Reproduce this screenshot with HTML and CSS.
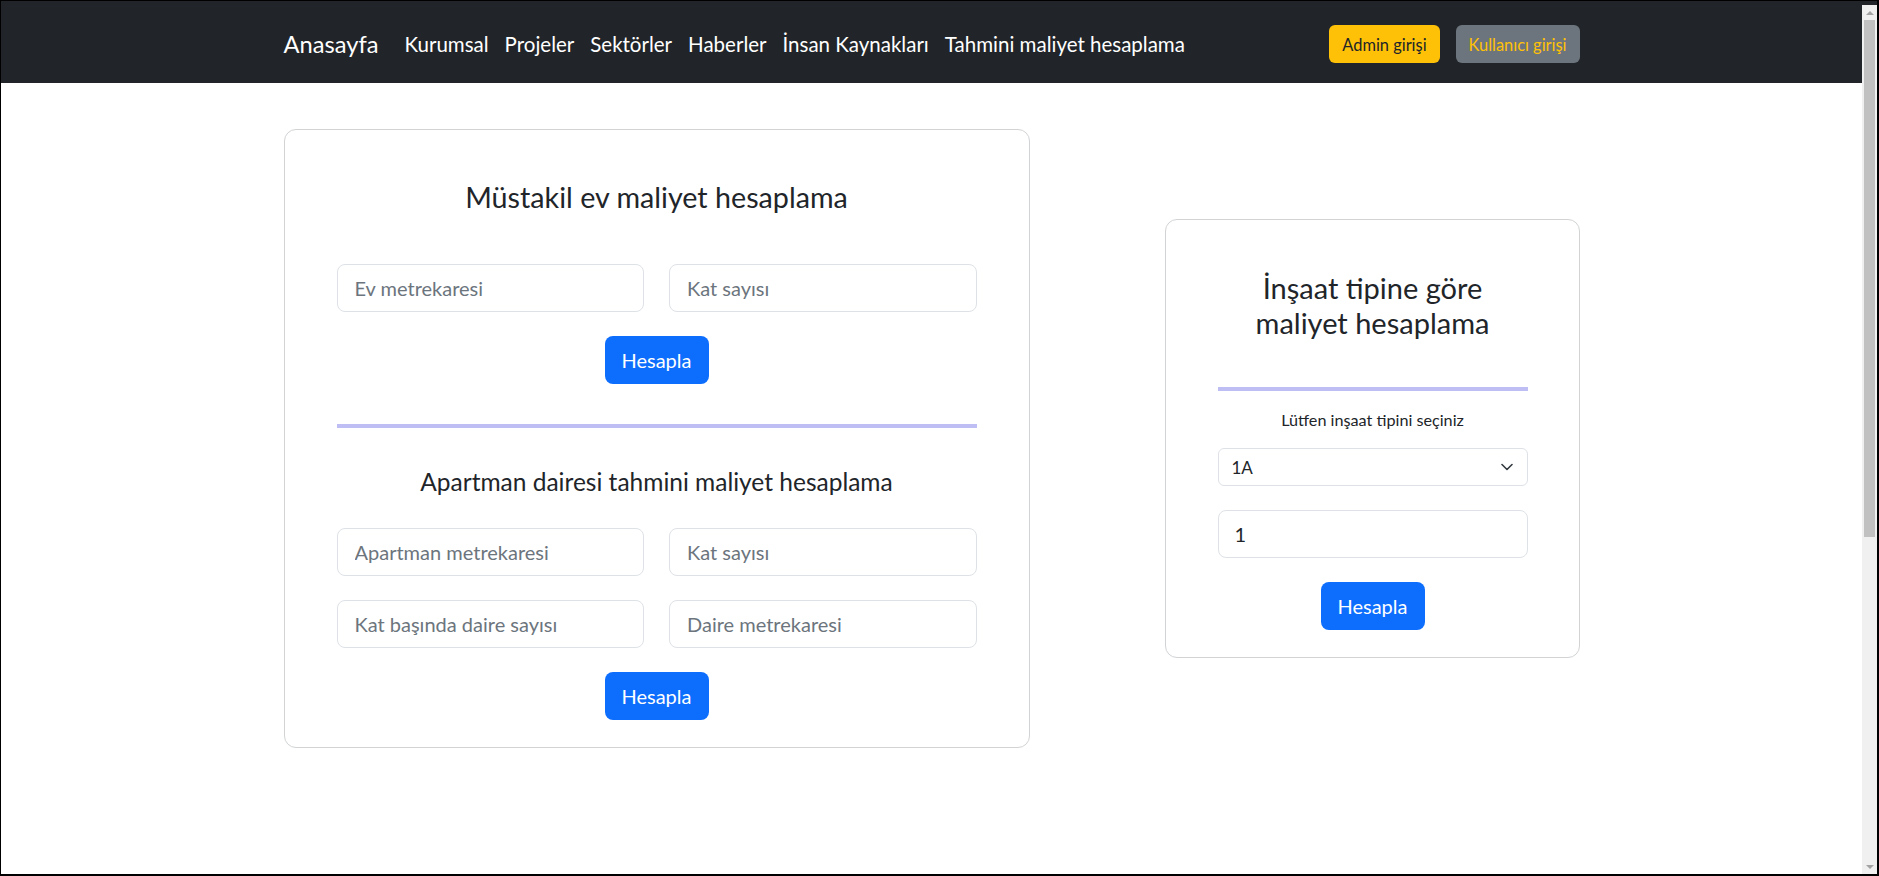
FILE: index.html
```html
<!DOCTYPE html>
<html lang="tr">
<head>
<meta charset="utf-8">
<title>Tahmini maliyet hesaplama</title>
<link rel="stylesheet" href="styles.css">
</head>
<body>
<div class="window">
  <div class="page">
    <nav class="navbar">
      <div class="container nav-inner">
        <a class="brand" href="#">Anasayfa</a>
        <ul class="nav-links">
          <li><a href="#">Kurumsal</a></li>
          <li><a href="#">Projeler</a></li>
          <li><a href="#">Sektörler</a></li>
          <li><a href="#">Haberler</a></li>
          <li><a href="#">İnsan Kaynakları</a></li>
          <li><a href="#">Tahmini maliyet hesaplama</a></li>
        </ul>
        <div class="nav-actions">
          <button class="nav-btn btn-warning" type="button">Admin girişi</button>
          <button class="nav-btn btn-secondary" type="button">Kullanıcı girişi</button>
        </div>
      </div>
    </nav>

    <main class="container content">
      <section class="card card-left">
        <h3 class="card-title title-left">Müstakil ev maliyet hesaplama</h3>
        <div class="input-grid">
          <input class="form-control" type="text" placeholder="Ev metrekaresi">
          <input class="form-control" type="text" placeholder="Kat sayısı">
        </div>
        <button class="btn-primary" type="button">Hesapla</button>
        <div class="divider divider-left"></div>
        <h4 class="card-subtitle">Apartman dairesi tahmini maliyet hesaplama</h4>
        <div class="input-grid">
          <input class="form-control" type="text" placeholder="Apartman metrekaresi">
          <input class="form-control" type="text" placeholder="Kat sayısı">
          <input class="form-control" type="text" placeholder="Kat başında daire sayısı">
          <input class="form-control" type="text" placeholder="Daire metrekaresi">
        </div>
        <button class="btn-primary" type="button">Hesapla</button>
      </section>

      <section class="card card-right">
        <h3 class="card-title title-right">İnşaat tipine göre<br>maliyet hesaplama</h3>
        <div class="divider"></div>
        <label class="select-label" for="tip">Lütfen inşaat tipini seçiniz</label>
        <div class="select-wrap">
          <select id="tip" class="form-select">
            <option>1A</option>
            <option>1B</option>
            <option>2A</option>
          </select>
          <svg class="chevron" width="12" height="8" viewBox="0 0 12 8" aria-hidden="true">
            <polyline points="1,1.5 6,6.5 11,1.5" fill="none" stroke="#343a40" stroke-width="1.6" stroke-linecap="round" stroke-linejoin="round"/>
          </svg>
        </div>
        <input class="form-control value-input" type="text" value="1">
        <button class="btn-primary" type="button">Hesapla</button>
      </section>
    </main>
  </div>

  <div class="scrollbar" aria-hidden="true">
    <div class="sb-btn sb-up"></div>
    <div class="sb-thumb"></div>
    <div class="sb-track"></div>
    <div class="sb-btn sb-down"></div>
  </div>
</div>
</body>
</html>
```

FILE: styles.css
```css
* {
  box-sizing: border-box;
}

html,
body {
  margin: 0;
  padding: 0;
  height: 100%;
}

body {
  font-family: Lato, "Noto Sans", sans-serif;
  color: #212529;
  background: #000;
  overflow: hidden;
}

.window {
  display: flex;
  height: 876px;
  border-top: 1px solid #000;
  border-left: 1px solid #000;
  border-right: 2px solid #000;
  border-bottom: 2px solid #000;
}

.page {
  flex: 1;
  min-width: 0;
  background: #fff;
}

.container {
  width: 1296px;
  margin: 0 auto;
}

/* Navbar */
.navbar {
  background: #212529;
  height: 82px;
  padding-top: 24px;
}

.nav-inner {
  display: flex;
  align-items: center;
  height: 38px;
}

.brand {
  color: #fff;
  font-size: 23.7px;
  text-decoration: none;
  margin-right: 26px;
}

.nav-links {
  display: flex;
  gap: 16px;
  list-style: none;
  margin: 0;
  padding: 0;
}

.nav-links a {
  color: #fff;
  text-decoration: none;
  font-size: 20.5px;
}

.nav-actions {
  margin-left: auto;
  display: flex;
  gap: 16px;
}

.nav-btn {
  height: 38px;
  padding: 0 13px;
  border: 0;
  border-radius: 6px;
  font-family: inherit;
  font-size: 16.4px;
}

.btn-warning {
  background: #ffc107;
  color: #212529;
}

.btn-secondary {
  background: #6c757d;
  color: #ffc107;
}

/* Content */
.content {
  display: flex;
  justify-content: space-between;
  align-items: center;
  padding-top: 46px;
}

.card {
  background: #fff;
  border: 1px solid #d1d3d5;
  border-radius: 12px;
}

.card-left {
  width: 746px;
  padding: 50px 52px 27px 52px;
}

.card-right {
  width: 415px;
  padding: 51px 51px 27px 52px;
}

.card-title {
  margin: 0;
  font-weight: 400;
  text-align: center;
}

.title-left {
  font-size: 28.7px;
  line-height: 35px;
  margin-bottom: 49px;
}

.title-right {
  font-size: 29px;
  line-height: 34.5px;
  margin-bottom: 47px;
}

.card-subtitle {
  margin: 39px 0 32px;
  font-weight: 400;
  font-size: 24.5px;
  line-height: 29px;
  text-align: center;
}

.input-grid {
  display: grid;
  grid-template-columns: 1fr 1fr;
  column-gap: 25px;
  row-gap: 24px;
}

.form-control {
  display: block;
  width: 100%;
  height: 48px;
  padding: 0 17px;
  border: 1px solid #dee2e6;
  border-radius: 8px;
  background: #fff;
  font-family: inherit;
  font-size: 20px;
  color: #212529;
  outline: none;
}

.form-control::placeholder {
  color: #6c757d;
}

.btn-primary {
  display: block;
  height: 48px;
  margin: 24px auto 0;
  padding: 0 17px;
  border: 0;
  border-radius: 8px;
  background: #0d6efd;
  color: #fff;
  font-family: inherit;
  font-size: 20px;
}

.divider {
  height: 4px;
  background: #bebef4;
}

.divider-left {
  margin-top: 40px;
}

.select-label {
  display: block;
  margin-top: 19px;
  font-size: 16.2px;
  line-height: 20px;
  text-align: center;
}

.select-wrap {
  position: relative;
  margin-top: 18px;
}

.form-select {
  display: block;
  width: 100%;
  height: 38px;
  padding: 0 13px;
  border: 1px solid #dee2e6;
  border-radius: 6px;
  background: #fff;
  font-family: inherit;
  font-size: 17px;
  color: #212529;
  appearance: none;
  -webkit-appearance: none;
  outline: none;
}

.chevron {
  position: absolute;
  right: 15px;
  top: 15px;
  pointer-events: none;
}

.value-input {
  margin-top: 24px;
  padding-left: 16px;
}

/* Scrollbar */
.scrollbar {
  width: 15px;
  display: flex;
  flex-direction: column;
  background: #f0f0f0;
  border-top: 4px solid #212529;
}

.sb-btn {
  height: 15px;
  display: flex;
  align-items: center;
  justify-content: center;
}

.sb-up::before {
  content: "";
  border-left: 4px solid transparent;
  border-right: 4px solid transparent;
  border-bottom: 4px solid #a3a3a3;
}

.sb-down::before {
  content: "";
  border-left: 4px solid transparent;
  border-right: 4px solid transparent;
  border-top: 4px solid #a3a3a3;
}

.sb-thumb {
  height: 517px;
  margin: 0 2px;
  background: #c1c1c1;
}

.sb-track {
  flex: 1;
}
```
